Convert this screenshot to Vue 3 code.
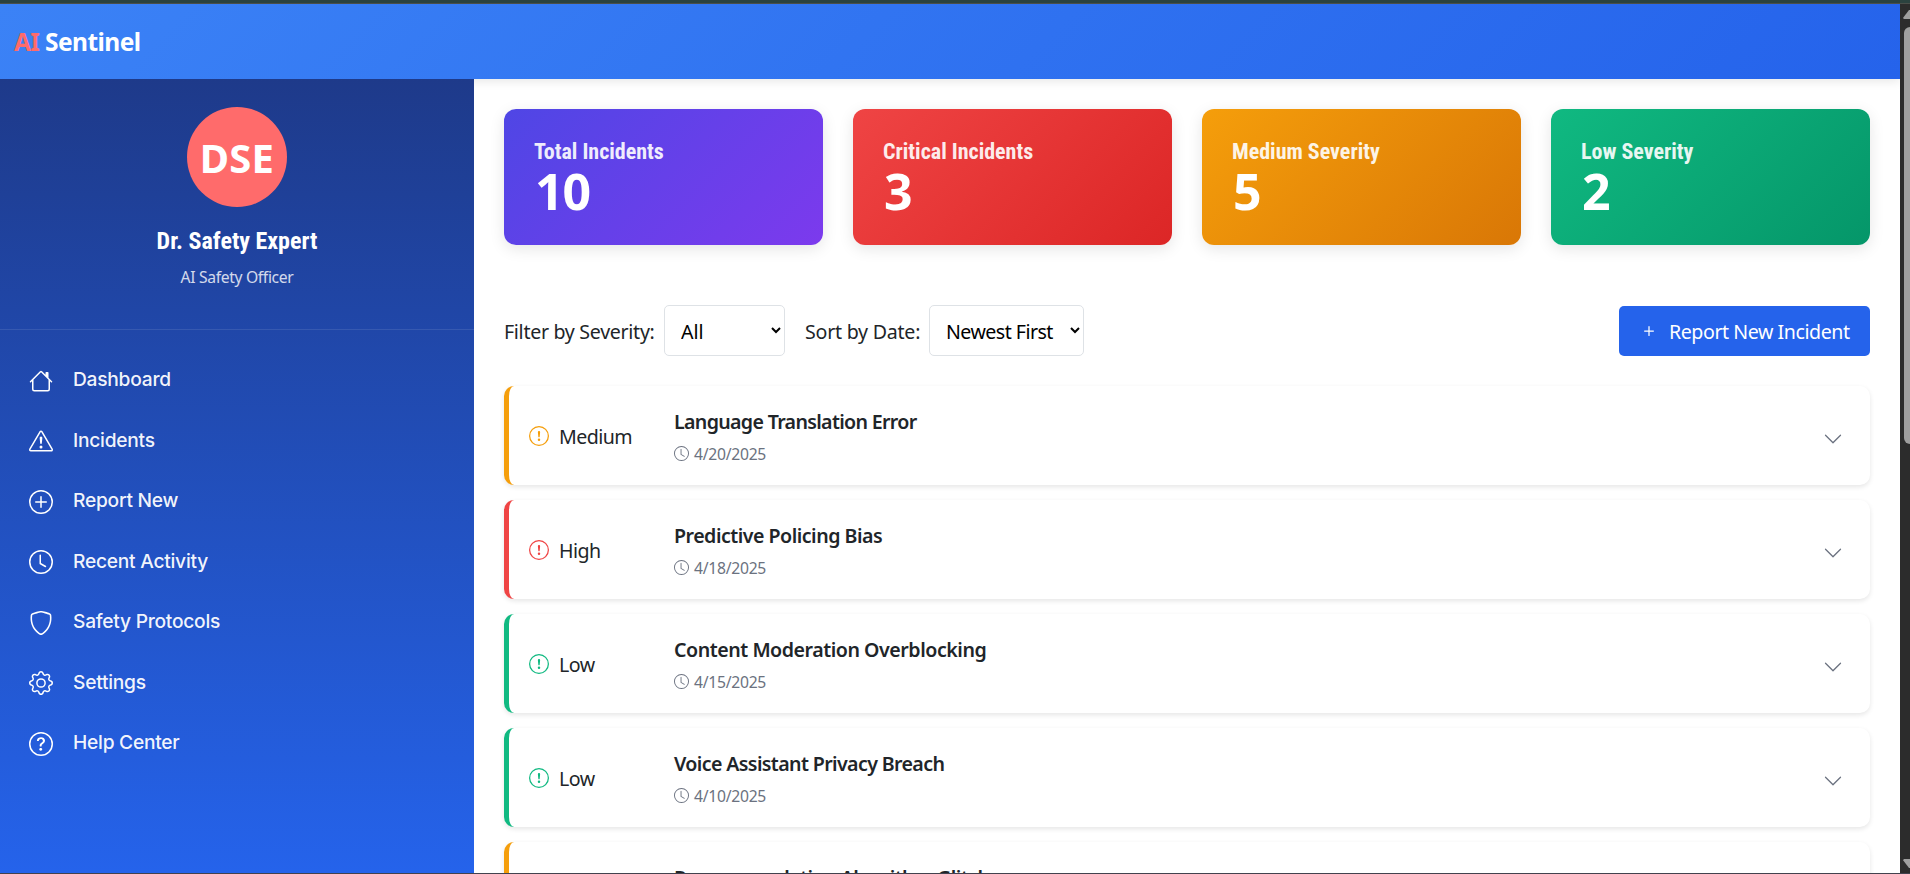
<script setup>
import { ref } from 'vue'

const circle = 'M8 15A7 7 0 1 1 8 1a7 7 0 0 1 0 14m0 1A8 8 0 1 0 8 0a8 8 0 0 0 0 16'
const alertMark = 'M7.002 11a1 1 0 1 1 2 0 1 1 0 0 1-2 0M7.1 4.995a.905.905 0 1 1 1.8 0l-.35 3.507a.552.552 0 0 1-1.1 0z'
const clock = [
  'M8 3.5a.5.5 0 0 0-1 0V9a.5.5 0 0 0 .252.434l3.5 2a.5.5 0 0 0 .496-.868L8 8.71z',
  'M8 16A8 8 0 1 0 8 0a8 8 0 0 0 0 16m7-8A7 7 0 1 1 1 8a7 7 0 0 1 14 0',
]

const nav = [
  { key: 'dashboard', label: 'Dashboard', paths: ['M8.707 1.5a1 1 0 0 0-1.414 0L.646 8.146a.5.5 0 0 0 .708.708L2 8.207V13.5A1.5 1.5 0 0 0 3.5 15h9a1.5 1.5 0 0 0 1.5-1.5V8.207l.646.647a.5.5 0 0 0 .708-.708L13 5.793V2.5a.5.5 0 0 0-.5-.5h-1a.5.5 0 0 0-.5.5v1.293zM13 7.207V13.5a.5.5 0 0 1-.5.5h-9a.5.5 0 0 1-.5-.5V7.207l5-5z'] },
  { key: 'incidents', label: 'Incidents', paths: ['M7.938 2.016A.13.13 0 0 1 8.002 2a.13.13 0 0 1 .063.016.15.15 0 0 1 .054.057l6.857 11.667c.036.06.035.124.002.183a.2.2 0 0 1-.054.06.1.1 0 0 1-.066.017H1.146a.1.1 0 0 1-.066-.017.2.2 0 0 1-.054-.06.18.18 0 0 1 .002-.183L7.884 2.073a.15.15 0 0 1 .054-.057m1.044-.45a1.13 1.13 0 0 0-1.96 0L.165 13.233c-.457.778.091 1.767.98 1.767h13.713c.889 0 1.438-.99.98-1.767z', 'M7.002 12a1 1 0 1 1 2 0 1 1 0 0 1-2 0M7.1 5.995a.905.905 0 1 1 1.8 0l-.35 3.507a.552.552 0 0 1-1.1 0z'] },
  { key: 'report', label: 'Report New', paths: [circle, 'M8 4a.5.5 0 0 1 .5.5v3h3a.5.5 0 0 1 0 1h-3v3a.5.5 0 0 1-1 0v-3h-3a.5.5 0 0 1 0-1h3v-3A.5.5 0 0 1 8 4'] },
  { key: 'activity', label: 'Recent Activity', paths: clock },
  { key: 'safety', label: 'Safety Protocols', paths: ['M5.338 1.59a61 61 0 0 0-2.837.856.48.48 0 0 0-.328.39c-.554 4.157.726 7.19 2.253 9.188a10.7 10.7 0 0 0 2.287 2.233c.346.244.652.42.893.533q.18.085.293.118a1 1 0 0 0 .101.025 1 1 0 0 0 .1-.025q.114-.034.294-.118c.24-.113.547-.29.893-.533a10.7 10.7 0 0 0 2.287-2.233c1.527-1.997 2.807-5.031 2.253-9.188a.48.48 0 0 0-.328-.39c-.651-.213-1.75-.56-2.837-.855C9.552 1.29 8.531 1.067 8 1.067c-.53 0-1.552.223-2.662.524zM5.072.56C6.157.265 7.31 0 8 0s1.843.265 2.928.56c1.11.3 2.229.655 2.887.87a1.54 1.54 0 0 1 1.044 1.262c.596 4.477-.787 7.795-2.465 9.99a11.8 11.8 0 0 1-2.517 2.453 7 7 0 0 1-1.048.625c-.28.132-.581.24-.829.24s-.548-.108-.829-.24a7 7 0 0 1-1.048-.625 11.8 11.8 0 0 1-2.517-2.453C1.928 10.487.545 7.169 1.141 2.692A1.54 1.54 0 0 1 2.185 1.43 63 63 0 0 1 5.072.56'] },
  { key: 'settings', label: 'Settings', paths: ['M8 4.754a3.246 3.246 0 1 0 0 6.492 3.246 3.246 0 0 0 0-6.492M5.754 8a2.246 2.246 0 1 1 4.492 0 2.246 2.246 0 0 1-4.492 0', 'M9.796 1.343c-.527-1.79-3.065-1.79-3.592 0l-.094.319a.873.873 0 0 1-1.255.52l-.292-.16c-1.64-.892-3.433.902-2.54 2.541l.159.292a.873.873 0 0 1-.52 1.255l-.319.094c-1.79.527-1.79 3.065 0 3.592l.319.094a.873.873 0 0 1 .52 1.255l-.16.292c-.892 1.64.901 3.434 2.541 2.54l.292-.159a.873.873 0 0 1 1.255.52l.094.319c.527 1.79 3.065 1.79 3.592 0l.094-.319a.873.873 0 0 1 1.255-.52l.292.16c1.64.893 3.434-.902 2.54-2.541l-.159-.292a.873.873 0 0 1 .52-1.255l.319-.094c1.79-.527 1.79-3.065 0-3.592l-.319-.094a.873.873 0 0 1-.52-1.255l.16-.292c.893-1.64-.902-3.433-2.541-2.54l-.292.159a.873.873 0 0 1-1.255-.52zm-2.633.283c.246-.835 1.428-.835 1.674 0l.094.319a1.873 1.873 0 0 0 2.693 1.115l.291-.16c.764-.415 1.6.42 1.184 1.185l-.159.292a1.873 1.873 0 0 0 1.116 2.692l.318.094c.835.246.835 1.428 0 1.674l-.319.094a1.873 1.873 0 0 0-1.115 2.693l.16.291c.415.764-.42 1.6-1.185 1.184l-.291-.159a1.873 1.873 0 0 0-2.693 1.116l-.094.318c-.246.835-1.428.835-1.674 0l-.094-.319a1.873 1.873 0 0 0-2.692-1.115l-.292.16c-.764.415-1.6-.42-1.184-1.185l.159-.291A1.873 1.873 0 0 0 1.945 8.93l-.319-.094c-.835-.246-.835-1.428 0-1.674l.319-.094A1.873 1.873 0 0 0 3.06 4.377l-.16-.292c-.415-.764.42-1.6 1.185-1.184l.292.159a1.873 1.873 0 0 0 2.692-1.115z'] },
  { key: 'help', label: 'Help Center', paths: [circle, 'M5.255 5.786a.237.237 0 0 0 .241.247h.825c.138 0 .248-.113.266-.25.09-.656.54-1.134 1.342-1.134.686 0 1.314.343 1.314 1.168 0 .635-.374.927-.965 1.371-.673.489-1.206 1.06-1.168 1.987l.003.217a.25.25 0 0 0 .25.246h.811a.25.25 0 0 0 .25-.25v-.105c0-.718.273-.927 1.01-1.486.609-.463 1.244-.977 1.244-2.056 0-1.511-1.276-2.241-2.673-2.241-1.267 0-2.655.59-2.75 2.286m1.557 5.763c0 .533.425.927 1.01.927.609 0 1.028-.394 1.028-.927 0-.552-.42-.94-1.029-.94-.584 0-1.009.388-1.009.94'] },
]

const stats = [
  { tone: 'total', label: 'Total Incidents', value: 10 },
  { tone: 'critical', label: 'Critical Incidents', value: 3 },
  { tone: 'warn', label: 'Medium Severity', value: 5 },
  { tone: 'ok', label: 'Low Severity', value: 2 },
]

const incidents = [
  { key: 'translation', severity: 'Medium', title: 'Language Translation Error', date: '4/20/2025' },
  { key: 'policing', severity: 'High', title: 'Predictive Policing Bias', date: '4/18/2025' },
  { key: 'moderation', severity: 'Low', title: 'Content Moderation Overblocking', date: '4/15/2025' },
  { key: 'voice', severity: 'Low', title: 'Voice Assistant Privacy Breach', date: '4/10/2025' },
  { key: 'recommend', severity: 'Medium', title: 'Recommendation Algorithm Glitch' },
]

const severity = ref('All')
const order = ref('Newest First')
</script>

<template>
  <div class="screen">
    <div class="window-edge"></div>
    <div class="viewport">
      <div class="page">
        <header class="topbar"><div class="logo"><span class="accent">AI</span> Sentinel</div></header>
        <div class="body">
          <aside class="sidebar">
            <div class="profile">
              <div class="avatar">DSE</div>
              <h3 class="name">Dr. Safety Expert</h3>
              <p class="role">AI Safety Officer</p>
            </div>
            <nav class="nav">
              <a v-for="n in nav" :key="n.key" class="nav-item">
                <svg class="nav-icon" viewBox="0 0 16 16"><path v-for="p in n.paths" :key="p" :d="p" /></svg>
                <span>{{ n.label }}</span>
              </a>
            </nav>
          </aside>
          <main class="main">
            <section class="stats">
              <div v-for="s in stats" :key="s.tone" class="stat" :class="s.tone">
                <h3 class="stat-label">{{ s.label }}</h3>
                <div class="stat-value">{{ s.value }}</div>
              </div>
            </section>
            <section class="controls">
              <span class="control-label first">Filter by Severity:</span>
              <select v-model="severity" class="select severity"><option>All</option><option>High</option><option>Medium</option><option>Low</option></select>
              <span class="control-label second">Sort by Date:</span>
              <select v-model="order" class="select order"><option>Newest First</option><option>Oldest First</option></select>
              <button class="report">
                <svg class="plus" viewBox="0 0 16 16"><path d="M8 4a.5.5 0 0 1 .5.5v3h3a.5.5 0 0 1 0 1h-3v3a.5.5 0 0 1-1 0v-3h-3a.5.5 0 0 1 0-1h3v-3A.5.5 0 0 1 8 4" /></svg>
                <span class="report-text">Report New Incident</span>
              </button>
            </section>
            <section class="list">
              <article v-for="i in incidents" :key="i.key" class="incident" :class="i.severity.toLowerCase()">
                <div class="severity-cell">
                  <svg class="alert" viewBox="0 0 16 16"><path :d="circle" /><path :d="alertMark" /></svg>
                  <span v-if="i.date" class="severity-name">{{ i.severity }}</span>
                </div>
                <div class="details">
                  <h4 class="title" :class="i.key">{{ i.title }}</h4>
                  <div class="date">
                    <template v-if="i.date">
                      <svg class="clock" viewBox="0 0 16 16"><path v-for="p in clock" :key="p" :d="p" /></svg>
                      <span>{{ i.date }}</span>
                    </template>
                  </div>
                </div>
                <svg class="chevron" viewBox="0 0 16 16"><path d="M1.646 4.646a.5.5 0 0 1 .708 0L8 10.293l5.646-5.647a.5.5 0 0 1 .708.708l-6 6a.5.5 0 0 1-.708 0l-6-6a.5.5 0 0 1 0-.708" /></svg>
              </article>
            </section>
          </main>
        </div>
      </div>
      <div class="scrollbar">
        <svg class="arrow" viewBox="0 0 7 9"><path d="M7 0H6L0.3 7.5Q0 9 1.2 9H7Z" /></svg>
        <div class="thumb"></div>
        <svg class="arrow down" viewBox="0 0 7 9"><path d="M7 9H6L0.3 1.5Q0 0 1.2 0H7Z" /></svg>
      </div>
    </div>
    <div class="window-base"></div>
  </div>
</template>

<style>
body { margin: 0; overflow: hidden; }
</style>

<style scoped>
.screen { display: flex; flex-direction: column; width: 1910px; height: 874px; overflow: hidden; font-family: "Noto Sans", "Open Sans", sans-serif; font-size: 19.6px; color: #212529; }
.screen * { box-sizing: border-box; }
svg { fill: currentColor; display: block; flex: none; }
h3, h4, p { margin: 0; }
.window-edge { height: 4px; flex: none; background: #2b423f; border-bottom: 1px solid #4a4f4a; }
.window-base { height: 1px; flex: none; background: #42424e; }
.viewport { display: flex; height: 869px; }
.page { width: 1900px; height: 869px; overflow: hidden; background: #fff; }
.topbar { display: flex; align-items: center; height: 75px; padding: 0 14px; background: linear-gradient(135deg, #3b82f6, #2563eb); box-shadow: 0 2px 10px rgba(0, 0, 0, .1); position: relative; z-index: 1; }
.logo { font-size: 24.5px; font-weight: 700; color: #fff; line-height: 36px; letter-spacing: -.52px; white-space: nowrap; }
.accent { color: #ff6b6b; letter-spacing: -.7px; }
.body { display: flex; height: 794px; }
.sidebar { width: 474px; flex: none; color: #fff; background: linear-gradient(180deg, #1e3a8a, #2563eb); position: relative; z-index: 2; }
.profile { display: flex; flex-direction: column; align-items: center; height: 251px; padding-top: 28px; border-bottom: 1px solid rgba(255, 255, 255, .1); }
.avatar { display: flex; align-items: center; justify-content: center; width: 100px; height: 100px; border-radius: 50%; background: #ff6b6b; font-size: 40px; font-weight: 700; letter-spacing: .3px; padding-top: 1px; }
.name { margin-top: 19px; font: 700 24px/30px Roboto, sans-serif; font-stretch: 75%; }
.role { margin-top: 9px; font-size: 15.7px; line-height: 24px; letter-spacing: -.35px; opacity: .8; }
.nav { padding-top: 19px; }
.nav-item { display: flex; align-items: center; gap: 20px; height: 60.5px; padding-left: 29px; font: 500 19.2px/24px Inter, sans-serif; letter-spacing: -.25px; color: rgba(255, 255, 255, .95); }
.nav-icon { width: 24px; height: 24px; margin-top: 3px; color: #fff; }
.main { flex: 1; padding: 30px; }
.stats { display: grid; grid-template-columns: repeat(4, 1fr); gap: 30px; }
.stat { height: 136px; padding: 28px 30px 0; border-radius: 12px; color: #fff; box-shadow: 0 4px 15px rgba(0, 0, 0, .1); }
.total { background: linear-gradient(135deg, #4f46e5, #7c3aed); }
.critical { background: linear-gradient(135deg, #ef4444, #dc2626); }
.warn { background: linear-gradient(135deg, #f59e0b, #d97706); }
.ok { background: linear-gradient(135deg, #10b981, #059669); }
.stat-label { font: 700 22px/30px Roboto, sans-serif; font-stretch: 75%; opacity: .9; }
.stat-value { margin-top: -1px; padding-left: 1px; font-size: 50px; font-weight: 700; line-height: 50px; letter-spacing: -1px; }
.controls { display: flex; align-items: center; height: 51px; margin: 60px 0 30px; }
.select { height: 51px; padding: 1px 0 0 12px; border: 1px solid #dee2e6; border-radius: 5px; background: #fff; color: #000; font: 19.6px "Noto Sans", sans-serif; }
.control-label { padding-top: 2px; letter-spacing: -.3px; white-space: nowrap; }
.control-label.first { width: 160px; }
.control-label.second { width: 124px; margin-left: 20px; letter-spacing: -.24px; }
.select.severity { width: 121px; }
.select.order { width: 155px; letter-spacing: -.54px; }
.report { display: flex; align-items: center; width: 251px; height: 50px; margin: 1px 0 0 auto; padding: 0 0 0 20px; border: 0; border-radius: 5px; background: #2563eb; color: #fff; font: 19.6px "Noto Sans", sans-serif; letter-spacing: -.44px; white-space: nowrap; }
.report-text { padding-top: 1px; }
.plus { width: 20px; height: 20px; margin-right: 10px; }
.list { display: grid; gap: 15px; }
.incident { display: flex; align-items: center; height: 99px; padding-left: 20px; padding-right: 27px; border-left: 5px solid; border-radius: 10px; background: #fff; box-shadow: 0 2px 5px rgba(0, 0, 0, .1); }
.medium { border-color: #f59e0b; --tone: #f59e0b; }
.high { border-color: #ef4444; --tone: #ef4444; }
.low { border-color: #10b981; --tone: #10b981; }
.severity-cell { display: flex; align-items: center; gap: 10px; width: 145px; letter-spacing: -.54px; }
.severity-name { padding-top: 2px; }
.alert { width: 20px; height: 20px; margin-top: 1px; color: var(--tone); }
.details { flex: 1; }
.title { font-size: 19.6px; font-weight: 600; line-height: 32px; white-space: nowrap; }
.title.translation { letter-spacing: -.67px; }
.title.policing { letter-spacing: -.5px; }
.title.moderation { letter-spacing: -.46px; }
.title.voice { letter-spacing: -.62px; }
.title.recommend { letter-spacing: -.52px; }
.date { display: flex; align-items: center; gap: 5px; height: 24px; margin-top: 4px; font-size: 15.7px; line-height: 24px; letter-spacing: -.27px; color: #6b7280; }
.clock { width: 15px; height: 15px; }
.chevron { width: 20px; height: 20px; margin-top: 7px; color: #6b7280; }
.scrollbar { display: flex; flex-direction: column; width: 10px; height: 869px; padding: 6px 0 5px 3px; background: #2c2c2c; overflow: hidden; }
.arrow { width: 7px; height: 9px; color: #9f9f9f; }
.thumb { height: 417px; margin: 8px 0 0 1px; border-radius: 6px 0 0 6px; background: #9f9f9f; }
.down { margin-top: auto; }
</style>
